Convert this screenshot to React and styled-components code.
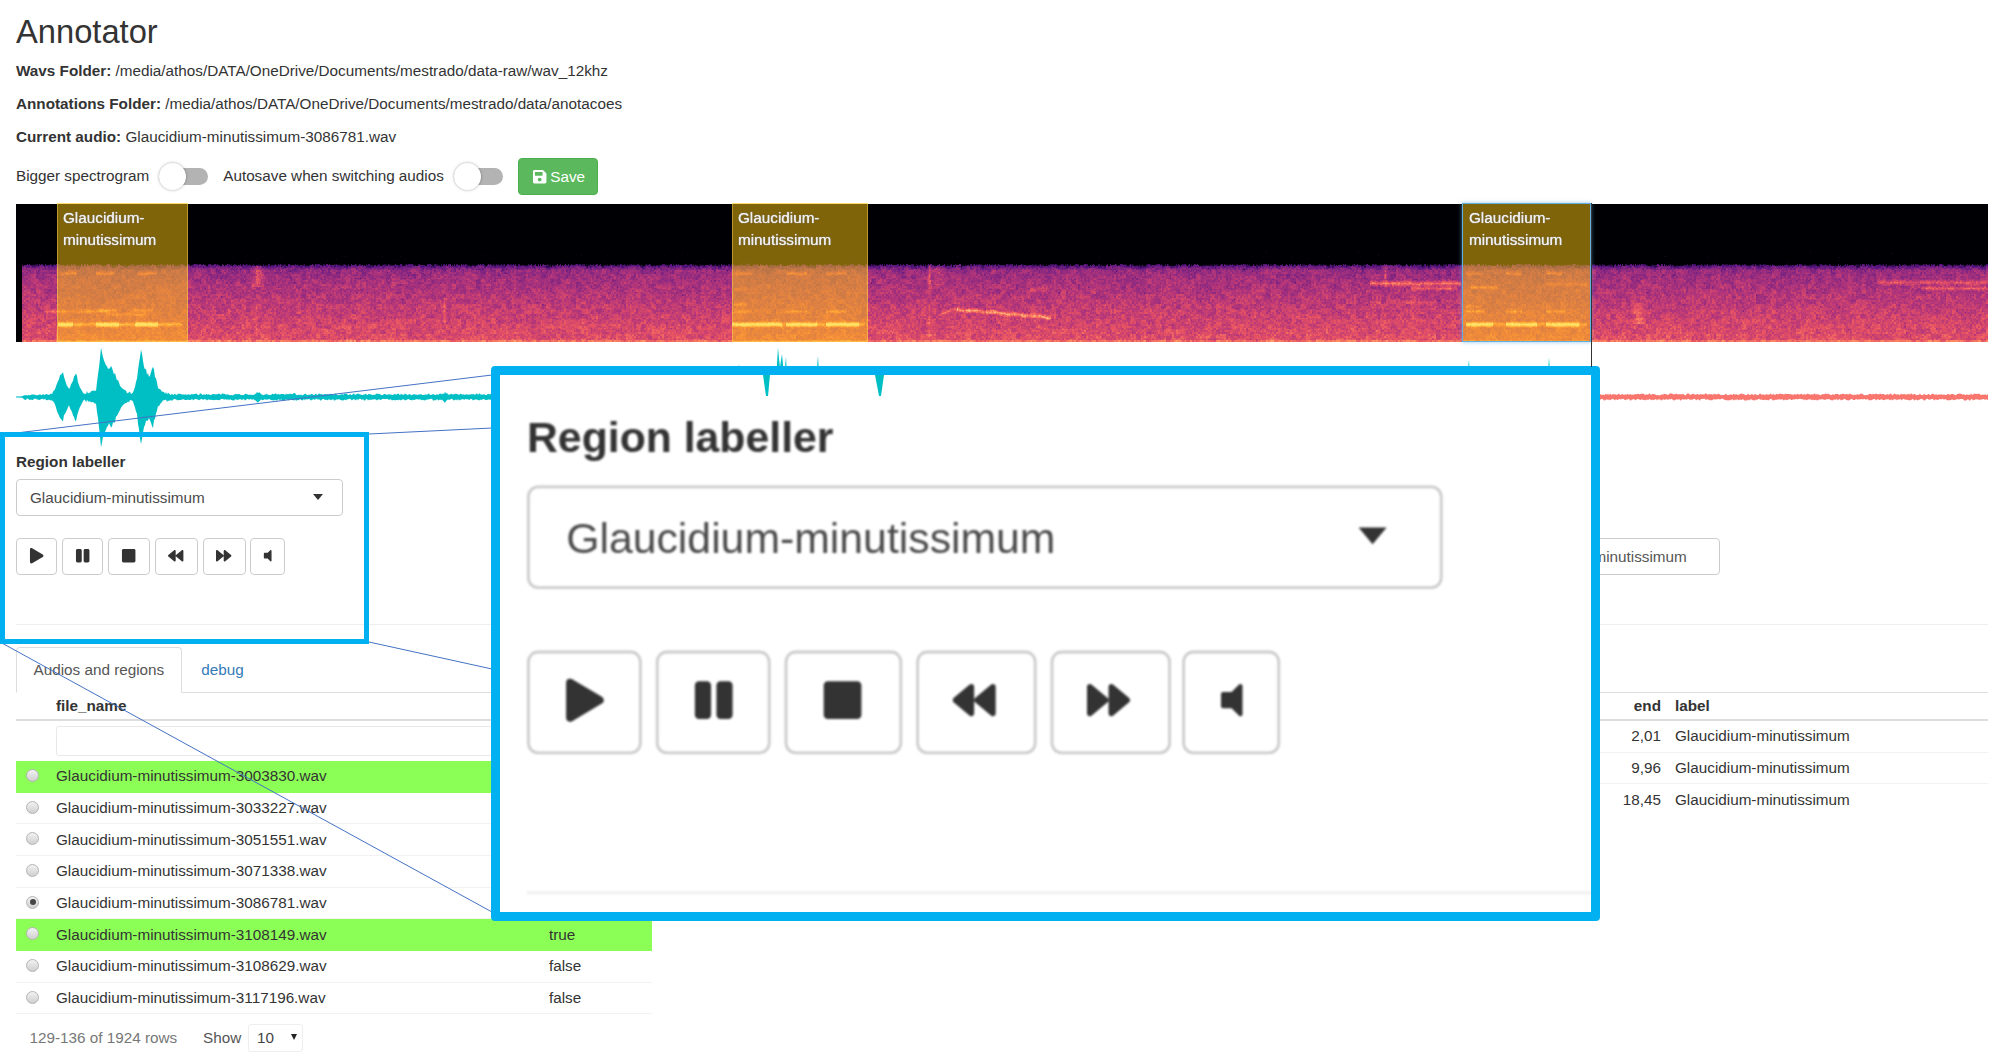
import React, { useEffect, useRef } from "react";
import styled, { createGlobalStyle } from "styled-components";
import {
  FaPlay,
  FaPause,
  FaStop,
  FaBackward,
  FaForward,
  FaVolumeOff,
  FaSave,
} from "react-icons/fa";

const GlobalStyle = createGlobalStyle`
  html, body {
    margin: 0;
    padding: 0;
    background: #fff;
    overflow: hidden;
  }
  body {
    font-family: "Liberation Sans", Arial, sans-serif;
    font-size: 15.27px;
    line-height: 22px;
    color: #333;
  }
  * { box-sizing: border-box; }
`;

const FILES = [
  { name: "Glaucidium-minutissimum-3003830.wav", value: "true", done: true },
  { name: "Glaucidium-minutissimum-3033227.wav", value: "false" },
  { name: "Glaucidium-minutissimum-3051551.wav", value: "false" },
  { name: "Glaucidium-minutissimum-3071338.wav", value: "false" },
  { name: "Glaucidium-minutissimum-3086781.wav", value: "false", current: true },
  { name: "Glaucidium-minutissimum-3108149.wav", value: "true", done: true },
  { name: "Glaucidium-minutissimum-3108629.wav", value: "false" },
  { name: "Glaucidium-minutissimum-3117196.wav", value: "false" },
];

const REGION_ROWS = [
  { end: "2,01", label: "Glaucidium-minutissimum" },
  { end: "9,96", label: "Glaucidium-minutissimum" },
  { end: "18,45", label: "Glaucidium-minutissimum" },
];

const SPEC_WIDTH = 1972;
const SPEC_HEIGHT = 138;
const CURSOR_X = 1575;

const REGIONS = [
  { left: 41, width: 131 },
  { left: 716, width: 136 },
  { left: 1446, width: 129, active: true },
];

const MAGMA = [
  [0, 0, 4],
  [81, 18, 124],
  [134, 39, 129],
  [183, 55, 121],
  [231, 82, 99],
  [252, 137, 97],
  [254, 196, 136],
  [252, 253, 191],
];

// horizontal bird calls: x1, x2, y, strength, half thickness
const STREAKS = [
  [45, 60, 69, 0.2, 1.5], [80, 97, 69, 0.26, 1.5], [121, 140, 69, 0.26, 1.5],
  [28, 90, 107, 0.16, 1.5], [82, 100, 106, 0.2, 1.5], [118, 136, 106, 0.2, 1.5],
  [90, 132, 110, 0.14, 1.5],
  [42, 165, 120, 0.26, 1.6], [42, 56, 120, 0.42, 2], [80, 102, 120, 0.42, 2], [119, 141, 120, 0.42, 2],
  [718, 735, 69, 0.2, 1.5], [770, 790, 69, 0.24, 1.5], [810, 830, 69, 0.2, 1.5],
  [718, 730, 85, 0.1, 1.5], [718, 730, 100, 0.14, 1.5],
  [718, 735, 107, 0.18, 1.5], [770, 790, 107, 0.2, 1.5], [810, 830, 107, 0.2, 1.5],
  [716, 848, 120, 0.24, 1.6], [716, 765, 120, 0.4, 2], [770, 800, 120, 0.4, 2], [810, 842, 120, 0.4, 2],
  [1014, 1030, 85, 0.12, 2],
  [1354, 1444, 79, 0.28, 2], [1395, 1440, 84, 0.2, 1.6],
  [1354, 1364, 98, 0.12, 1.5], [1385, 1420, 98, 0.1, 1.5],
  [1450, 1465, 69, 0.2, 1.5], [1490, 1505, 69, 0.2, 1.5], [1530, 1545, 69, 0.2, 1.5],
  [1455, 1480, 83, 0.22, 1.5], [1530, 1570, 80, 0.14, 1.5],
  [1450, 1465, 102, 0.14, 1.5], [1490, 1505, 107, 0.18, 1.5], [1450, 1468, 107, 0.2, 1.5], [1530, 1548, 107, 0.18, 1.5],
  [1450, 1570, 120, 0.24, 1.6], [1450, 1476, 120, 0.4, 2], [1490, 1520, 120, 0.4, 2], [1530, 1562, 120, 0.38, 2],
  [1861, 1972, 78, 0.18, 2], [1905, 1972, 84, 0.18, 1.6],
];

// calls that sweep downward: x1, y1, x2, y2, strength
const SWEEPS = [
  [924, 109, 941, 105, 0.14],
  [941, 105, 1034, 113, 0.3],
];

// vertical clicks: x, y1, y2, strength, half width
const CLICKS = [
  [241, 62, 82, 0.2, 8], [240, 100, 132, 0.08, 2.5], [428, 94, 118, 0.15, 2.5],
  [913, 60, 84, 0.22, 2.5], [921, 62, 80, 0.1, 9], [913, 100, 132, 0.09, 2.5],
  [1369, 60, 82, 0.16, 2.5], [1622, 99, 119, 0.14, 7],
];

function makeRandom(seed) {
  let s = seed;
  return () => {
    s = (s + 0x6d2b79f5) | 0;
    let t = Math.imul(s ^ (s >>> 15), 1 | s);
    t = (t + Math.imul(t ^ (t >>> 7), 61 | t)) ^ t;
    return ((t ^ (t >>> 14)) >>> 0) / 4294967296;
  };
}

function magmaColor(v) {
  const p = Math.max(0, Math.min(0.999, v)) * (MAGMA.length - 1);
  const i = Math.floor(p);
  const f = p - i;
  return MAGMA[i].map((c, k) => c + (MAGMA[i + 1][k] - c) * f);
}

function drawSpectrogram(canvas) {
  const ctx = canvas.getContext("2d");
  const img = ctx.createImageData(SPEC_WIDTH, SPEC_HEIGHT);
  const rnd = makeRandom(41);
  const cols = Math.ceil(SPEC_WIDTH / 2) + 2;
  const rows = Math.ceil(SPEC_HEIGHT / 2) + 2;
  const grid = new Float32Array(cols * rows).map(() => rnd() - 0.5);
  const coarseCols = Math.ceil(SPEC_WIDTH / 5) + 2;
  const coarseRows = Math.ceil(SPEC_HEIGHT / 5) + 2;
  const coarse = new Float32Array(coarseCols * coarseRows).map(() => rnd() - 0.5);
  const edge = new Float32Array(SPEC_WIDTH).map(() => 59 + rnd() * 2.4);

  for (let y = 0; y < SPEC_HEIGHT; y++) {
    for (let x = 0; x < SPEC_WIDTH; x++) {
      let v = 0;
      if (x >= 6 && y >= edge[x]) {
        const depth = (y - 60) / 78;
        v = 0.3 + 0.26 * Math.pow(depth, 0.8);
        if (y < 66) v -= (66 - y) * 0.035;
        const g = grid[(x >> 1) + (y >> 1) * cols];
        const c = coarse[Math.floor(x / 5) + Math.floor(y / 5) * coarseCols];
        v += g * 0.12 + c * 0.1 + (rnd() - 0.5) * 0.04;
        if (rnd() < 0.006) v -= 0.13;
        STREAKS.forEach(([x1, x2, sy, amp, half]) => {
          if (x < x1 || x > x2) return;
          const d = Math.abs(y - sy) / half;
          if (d < 1.8) v += amp * (1 - d / 1.8) * (0.8 + rnd() * 0.35);
        });
        SWEEPS.forEach(([x1, y1, x2, y2, amp]) => {
          if (x < x1 || x > x2) return;
          const sy = y1 + ((y2 - y1) * (x - x1)) / (x2 - x1) + Math.sin(x * 0.3) * 0.5;
          const d = Math.abs(y - sy);
          if (d < 3.2) v += amp * (1 - d / 3.2) * (0.7 + rnd() * 0.5);
        });
        CLICKS.forEach(([cx, y1, y2, amp, half]) => {
          const dx = Math.abs(x - cx) / half;
          if (dx < 1 && y >= y1 && y <= y2) v += amp * (1 - dx) * (0.7 + rnd() * 0.5);
        });
        if (y >= 136) v += 0.1;
      } else if (x >= 6 && y > 46 && rnd() < 0.012) {
        v = 0.03;
      }
      const [r, g, b] = magmaColor(v);
      const o = (x + y * SPEC_WIDTH) * 4;
      img.data[o] = r;
      img.data[o + 1] = g;
      img.data[o + 2] = b;
      img.data[o + 3] = 255;
    }
  }
  ctx.putImageData(img, 0, 0);
}

// waveform envelope: x on the page, amplitude in px
const ENVELOPE = [
  [16, 0.6], [22, 0.8], [24, 2.4], [52, 3], [55, 8], [62, 27], [66, 14], [69, 8], [72, 16], [76, 24],
  [79, 12], [83, 5], [90, 5], [96, 7], [99, 30], [101, 50], [103, 40], [106, 32], [109, 27], [111, 31],
  [115, 24], [119, 14], [123, 8], [128, 5], [133, 4], [137, 18], [141, 49], [144, 30], [146, 27],
  [149, 22], [153, 31], [155, 22], [158, 10], [163, 5], [168, 4], [175, 3], [255, 3], [258, 5], [261, 3],
  [292, 3], [294, 4], [297, 3], [442, 3], [445, 5], [448, 3], [735, 3], [739, 33], [741, 3], [775, 3],
  [778, 49], [780, 30], [782, 43], [784, 20], [786, 40], [788, 3], [815, 3], [818, 42], [820, 3],
  [1465, 3], [1469, 37], [1471, 3], [1506, 3], [1508, 32], [1510, 3], [1546, 3], [1549, 40], [1552, 3],
  [1988, 3],
];

function amplitudeAt(x) {
  for (let i = 1; i < ENVELOPE.length; i++) {
    const [x1, a1] = ENVELOPE[i - 1];
    const [x2, a2] = ENVELOPE[i];
    if (x <= x2) return a1 + ((a2 - a1) * (x - x1)) / (x2 - x1);
  }
  return 3;
}

function wavePath(from, to, seed) {
  const rnd = makeRandom(seed);
  const jitter = (a) => {
    if (a <= 6) return 0.55 + rnd() * 0.65;
    if (a < 28) return 0.86 + rnd() * 0.2;
    return 0.96 + rnd() * 0.06;
  };
  const top = [];
  const bottom = [];
  for (let x = from; x <= to; x++) {
    const a = amplitudeAt(x);
    top.push(`${x},${(55 - a * jitter(a)).toFixed(1)}`);
    bottom.push(`${x},${(55 + a * jitter(a)).toFixed(1)}`);
  }
  return `M${top.join("L")}L${bottom.reverse().join("L")}Z`;
}

const Page = styled.div`
  width: 2002px;
  height: 1058px;
  padding: 14px 14px 0 16px;
  position: relative;
  overflow: hidden;
`;

const Title = styled.h2`
  margin: 0 0 10px;
  font-size: 32.7px;
  line-height: 36px;
  font-weight: 400;
  color: #333;
`;

const InfoLine = styled.p`
  margin: 0 0 11px;
  b {
    font-weight: 700;
  }
`;

const ControlRow = styled.div`
  display: flex;
  align-items: center;
  height: 37px;
  margin-top: -1px;
  margin-bottom: 9px;
`;

const ToggleLabel = styled.span`
  margin-top: -2px;
  margin-right: 10px;
`;

const Toggle = styled.span`
  position: relative;
  display: block;
  flex: none;
  width: 49px;
  height: 17px;
  margin-top: -1px;
  margin-right: 15px;
  background: #b3b3b3;
  border-radius: 9px;
  &::after {
    content: "";
    position: absolute;
    left: 0;
    top: -5px;
    width: 27px;
    height: 27px;
    border-radius: 50%;
    background: #fff;
    box-shadow: 0 0 3px rgba(0, 0, 0, 0.35);
  }
`;

const SaveButton = styled.button`
  display: inline-flex;
  align-items: center;
  gap: 3px;
  height: 37px;
  width: 80px;
  padding: 0 13px;
  background: #5cb85c;
  border: 1px solid #4cae4c;
  border-radius: 4px;
  color: #fff;
  font: inherit;
  svg {
    flex: none;
  }
`;

const Spectrogram = styled.div`
  position: relative;
  width: ${SPEC_WIDTH}px;
  height: ${SPEC_HEIGHT}px;
  canvas {
    display: block;
    filter: blur(0.6px);
  }
`;

const Region = styled.div`
  position: absolute;
  top: -1px;
  bottom: 0;
  left: ${(p) => p.$left}px;
  width: ${(p) => p.$width}px;
  padding: 3px 5px 3px ${(p) => (p.$active ? 6 : 5)}px;
  background: rgba(255, 200, 14, 0.5);
  border: 1px solid ${(p) => (p.$active ? "#62aee0" : "rgba(255, 215, 90, 0.45)")};
  box-shadow: ${(p) => (p.$active ? "0 0 4px rgba(98, 174, 224, 0.7)" : "none")};
  color: #f0f0f0;
  text-shadow: 0 0 1px #fff, 0 0 2px #555;
`;

const Cursor = styled.div`
  position: absolute;
  top: -1px;
  left: ${CURSOR_X}px;
  width: 1px;
  height: 164px;
  background: #333;
  z-index: 1;
`;

const Waveform = styled.svg`
  display: block;
  width: 2002px;
  height: 109px;
  margin-left: -16px;
`;

const LabellerBlock = styled.section`
  width: 1972px;
`;

const LabellerTitle = styled.div`
  margin-bottom: 6px;
  font-weight: 700;
`;

const SelectBox = styled.div`
  display: flex;
  align-items: center;
  justify-content: space-between;
  width: 327px;
  height: 37px;
  padding: 0 19px 0 13px;
  border: 1px solid #ccc;
  border-radius: 4px;
  color: #4a4a4a;
  background: #fff;
  &::after {
    content: "";
    margin-top: -2px;
    border-left: 5px solid transparent;
    border-right: 5px solid transparent;
    border-top: 6px solid #333;
  }
`;

const PlayerRow = styled.div`
  display: flex;
  gap: 4.9px;
  margin-top: 21.7px;
`;

const PlayerButton = styled.button`
  display: flex;
  align-items: center;
  justify-content: center;
  width: ${(p) => p.$width}px;
  height: 37px;
  padding: 0;
  background: #fff;
  border: 1px solid #ccc;
  border-radius: 4px;
  color: #333;
`;

const RegionInput = styled.div`
  width: 222px;
  height: 37px;
  margin-left: auto;
  margin-right: 268px;
  padding: 7px 13px;
  border: 1px solid #ccc;
  border-radius: 4px;
  color: #555;
  white-space: nowrap;
`;

const Divider = styled.hr`
  margin: 49.3px 0 0;
  border: 0;
  border-top: 1px solid #eee;
`;

const TabBar = styled.nav`
  display: flex;
  height: 46px;
  margin-top: 22px;
  border-bottom: 1px solid #ddd;
`;

const Tab = styled.div`
  height: ${(p) => (p.$active ? 46 : 45)}px;
  padding: 11px 16.5px;
  margin-right: 2px;
  border: 1px solid ${(p) => (p.$active ? "#ddd" : "transparent")};
  border-bottom-color: ${(p) => (p.$active ? "#fff" : "transparent")};
  border-radius: 4px 4px 0 0;
  background: ${(p) => (p.$active ? "#fff" : "transparent")};
  color: ${(p) => (p.$active ? "#555" : "#337ab7")};
`;

const Columns = styled.div`
  display: flex;
  gap: 32px;
`;

const LeftColumn = styled.div`
  flex: none;
  width: 636px;
`;

const RightColumn = styled.div`
  flex: 1;
`;

const FileRow = styled.div`
  display: grid;
  grid-template-columns: 40px 493px 1fr;
  align-items: center;
  height: 31.7px;
  background: ${(p) => (p.$done ? "#8cff57" : "transparent")};
  border-bottom: 1px solid ${(p) => (p.$done ? "#8cff57" : "#f2f2f2")};
`;

const HeadRow = styled.div`
  display: grid;
  grid-template-columns: ${(p) => p.$cols};
  column-gap: ${(p) => p.$gap || 0}px;
  align-items: center;
  height: 28px;
  border-bottom: 2px solid #ddd;
  font-weight: 700;
`;

const FilterRow = styled.div`
  height: 40px;
  padding: 5px 0 0 40px;
`;

const FilterInput = styled.div`
  width: 480px;
  height: 30px;
  border: 1px solid #e8e8e8;
  border-radius: 3px;
`;

const Radio = styled.span`
  display: flex;
  align-items: center;
  justify-content: center;
  width: 13px;
  height: 13px;
  margin: -2px 0 0 10px;
  border-radius: 50%;
  border: 1px solid #b4b4b4;
  background: linear-gradient(#f2f2f2, #cfcfcf);
  &::after {
    content: "";
    display: ${(p) => (p.$on ? "block" : "none")};
    width: 6px;
    height: 6px;
    border-radius: 50%;
    background: #444;
  }
`;

const RegionRow = styled.div`
  display: grid;
  grid-template-columns: 1fr 313px;
  column-gap: 14px;
  align-items: center;
  height: 31.7px;
  border-bottom: 1px solid #f2f2f2;
  &:last-child {
    border-bottom: 0;
  }
`;

const EndCell = styled.span`
  text-align: right;
`;

const TableFooter = styled.div`
  display: flex;
  align-items: center;
  height: 28px;
  margin-top: 10px;
  padding-left: 13.5px;
`;

const RowCount = styled.span`
  width: 173.5px;
  color: #777;
`;

const ShowLabel = styled.span`
  width: 45px;
  color: #555;
`;

const PageSize = styled.div`
  display: flex;
  align-items: center;
  justify-content: space-between;
  width: 55px;
  height: 28px;
  padding: 0 5px 0 8px;
  border: 1px solid #eee;
  border-radius: 3px;
  color: #444;
  &::after {
    content: "";
    margin-top: -2px;
    border-left: 3.5px solid transparent;
    border-right: 3.5px solid transparent;
    border-top: 6px solid #222;
  }
`;

const CalloutLines = styled.svg`
  position: absolute;
  left: 0;
  top: 0;
  width: 2002px;
  height: 1058px;
  pointer-events: none;
`;

const SourceFrame = styled.div`
  position: absolute;
  left: 0;
  top: 432px;
  width: 369px;
  height: 212px;
  border: 5px solid #00b0f0;
`;

const Magnifier = styled.div`
  position: absolute;
  left: 491px;
  top: 366px;
  width: 1109px;
  height: 555px;
  border: 9px solid #00b0f0;
  border-radius: 4px;
  background: #fff;
  overflow: hidden;
`;

const MagnifiedTails = styled.svg`
  position: absolute;
  left: 0;
  top: 0;
  width: 500px;
  height: 30px;
`;

const Lens = styled.div`
  position: absolute;
  left: 26.5px;
  top: 31.6px;
  transform: scale(2.8);
  transform-origin: 0 0;
  filter: blur(0.3px);
`;

const PLAYER_BUTTONS = [
  { icon: FaPlay, width: 41 },
  { icon: FaPause, width: 41 },
  { icon: FaStop, width: 42 },
  { icon: FaBackward, width: 43 },
  { icon: FaForward, width: 43 },
  { icon: FaVolumeOff, width: 35 },
];

const LabellerPanel = ({ withInput }) => (
  <LabellerBlock>
    <LabellerTitle>Region labeller</LabellerTitle>
    <SelectBox>Glaucidium-minutissimum</SelectBox>
    <PlayerRow>
      {PLAYER_BUTTONS.map(({ icon: Icon, width }, i) => (
        <PlayerButton key={i} $width={width}>
          <Icon size={15.4} />
        </PlayerButton>
      ))}
      {withInput && <RegionInput>Glaucidium-minutissimum</RegionInput>}
    </PlayerRow>
    <Divider />
  </LabellerBlock>
);

const App = () => {
  const canvasRef = useRef(null);

  useEffect(() => {
    drawSpectrogram(canvasRef.current);
  }, []);

  return (
    <Page>
      <GlobalStyle />
      <Title>Annotator</Title>
      <InfoLine>
        <b>Wavs Folder:</b> /media/athos/DATA/OneDrive/Documents/mestrado/data-raw/wav_12khz
      </InfoLine>
      <InfoLine>
        <b>Annotations Folder:</b> /media/athos/DATA/OneDrive/Documents/mestrado/data/anotacoes
      </InfoLine>
      <InfoLine>
        <b>Current audio:</b> Glaucidium-minutissimum-3086781.wav
      </InfoLine>
      <ControlRow>
        <ToggleLabel>Bigger spectrogram</ToggleLabel>
        <Toggle />
        <ToggleLabel>Autosave when switching audios</ToggleLabel>
        <Toggle />
        <SaveButton>
          <FaSave size={15.4} />
          Save
        </SaveButton>
      </ControlRow>

      <Spectrogram>
        <canvas ref={canvasRef} width={SPEC_WIDTH} height={SPEC_HEIGHT} />
        {REGIONS.map((r) => (
          <Region key={r.left} $left={r.left} $width={r.width} $active={r.active}>
            Glaucidium-
            <br />
            minutissimum
          </Region>
        ))}
        <Cursor />
      </Spectrogram>

      <Waveform viewBox="0 0 2002 109">
        <path d={wavePath(16, 1591, 7)} fill="#00bfc4" />
        <path d={wavePath(1591, 1988, 19)} fill="#f8766d" />
      </Waveform>

      <LabellerPanel withInput />

      <TabBar>
        <Tab $active>Audios and regions</Tab>
        <Tab>debug</Tab>
      </TabBar>

      <Columns>
        <LeftColumn>
          <HeadRow $cols="40px 1fr">
            <span />
            <span>file_name</span>
          </HeadRow>
          <FilterRow>
            <FilterInput />
          </FilterRow>
          {FILES.map((f) => (
            <FileRow key={f.name} $done={f.done}>
              <Radio $on={f.current} />
              <span>{f.name}</span>
              <span>{f.value}</span>
            </FileRow>
          ))}
          <TableFooter>
            <RowCount>129-136 of 1924 rows</RowCount>
            <ShowLabel>Show</ShowLabel>
            <PageSize>10</PageSize>
          </TableFooter>
        </LeftColumn>
        <RightColumn>
          <HeadRow $cols="1fr 313px" $gap={14}>
            <EndCell>end</EndCell>
            <span>label</span>
          </HeadRow>
          {REGION_ROWS.map((r) => (
            <RegionRow key={r.end}>
              <EndCell>{r.end}</EndCell>
              <span>{r.label}</span>
            </RegionRow>
          ))}
        </RightColumn>
      </Columns>

      <CalloutLines viewBox="0 0 2002 1058" fill="none" stroke="#4472c4" strokeWidth="1">
        <line x1="0" y1="435" x2="492" y2="375" />
        <line x1="369" y1="434" x2="492" y2="428" />
        <line x1="369" y1="642" x2="492" y2="669" />
        <line x1="0" y1="642" x2="492" y2="912" />
      </CalloutLines>
      <SourceFrame />
      <Magnifier>
        <MagnifiedTails viewBox="0 0 500 30">
          <path d="M263 0L270 0L268 21L266 21Z" fill="#00bfc4" />
          <path d="M375 0L384 0L381 21L379 21Z" fill="#00bfc4" />
        </MagnifiedTails>
        <Lens>
          <LabellerPanel />
        </Lens>
      </Magnifier>
    </Page>
  );
};

export default App;
